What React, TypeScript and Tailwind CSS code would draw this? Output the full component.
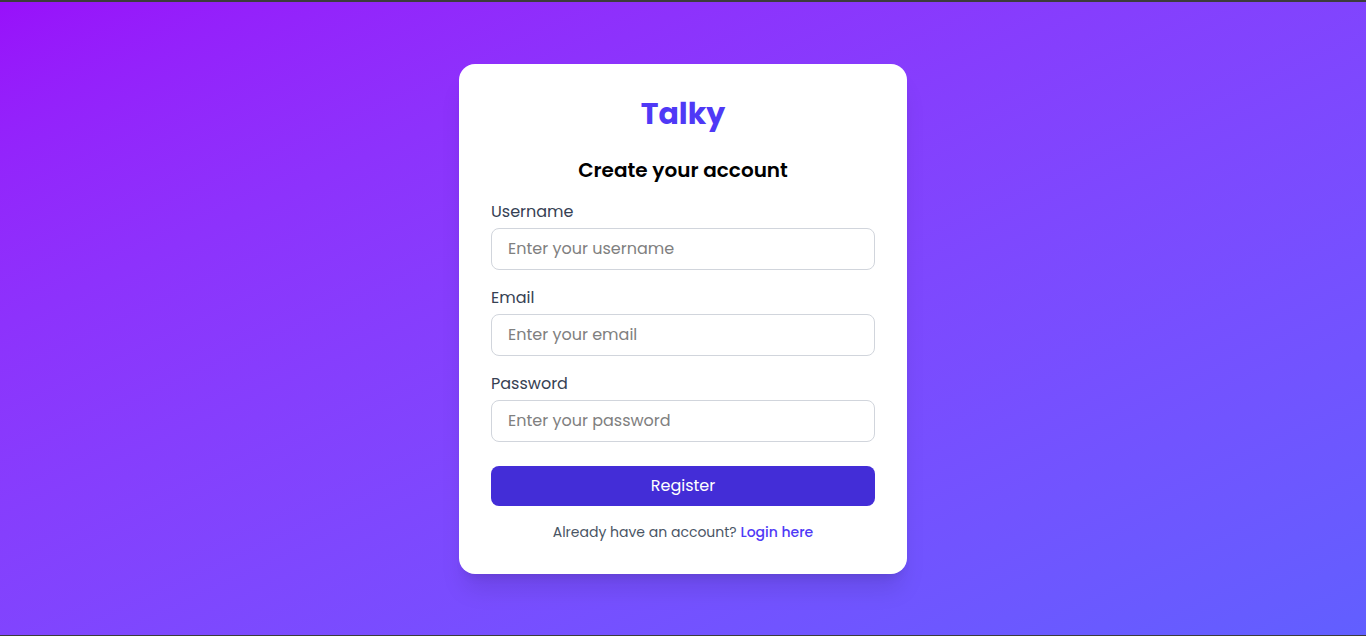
import React from "react";

type Field = { id: string; label: string; type: string; placeholder: string };

const fields: Field[] = [
  { id: "username", label: "Username", type: "text", placeholder: "Enter your username" },
  { id: "email", label: "Email", type: "email", placeholder: "Enter your email" },
  { id: "password", label: "Password", type: "password", placeholder: "Enter your password" },
];

export default function App() {
  return (
    <main className="flex min-h-screen items-center justify-center border-t-2 border-b border-[#3c3c3c] bg-gradient-to-br from-purple-600 to-indigo-500 font-['Poppins','Inter',sans-serif]">
      <section className="w-full max-w-md rounded-2xl bg-white p-8 shadow-xl">
        <h1 className="mb-6 text-center text-3xl font-bold text-indigo-600">Talky</h1>
        <h2 className="mb-4 text-center text-xl font-semibold text-black">Create your account</h2>
        <form className="flex flex-col gap-4" onSubmit={(e) => e.preventDefault()}>
          {fields.map((f) => (
            <div key={f.id}>
              <label htmlFor={f.id} className="mb-1 block text-gray-700">
                {f.label}
              </label>
              <input
                id={f.id}
                type={f.type}
                placeholder={f.placeholder}
                className="block w-full rounded-lg border border-gray-300 px-4 py-2 text-black placeholder:text-[#808080] focus:outline-indigo-500"
              />
            </div>
          ))}
          <button type="submit" className="mt-2 w-full rounded-lg bg-indigo-700 py-2 text-white">
            Register
          </button>
        </form>
        <p className="mt-4 text-center text-sm text-gray-600">
          Already have an account?{" "}
          <a href="#login" className="font-medium text-indigo-600">
            Login here
          </a>
        </p>
      </section>
    </main>
  );
}
